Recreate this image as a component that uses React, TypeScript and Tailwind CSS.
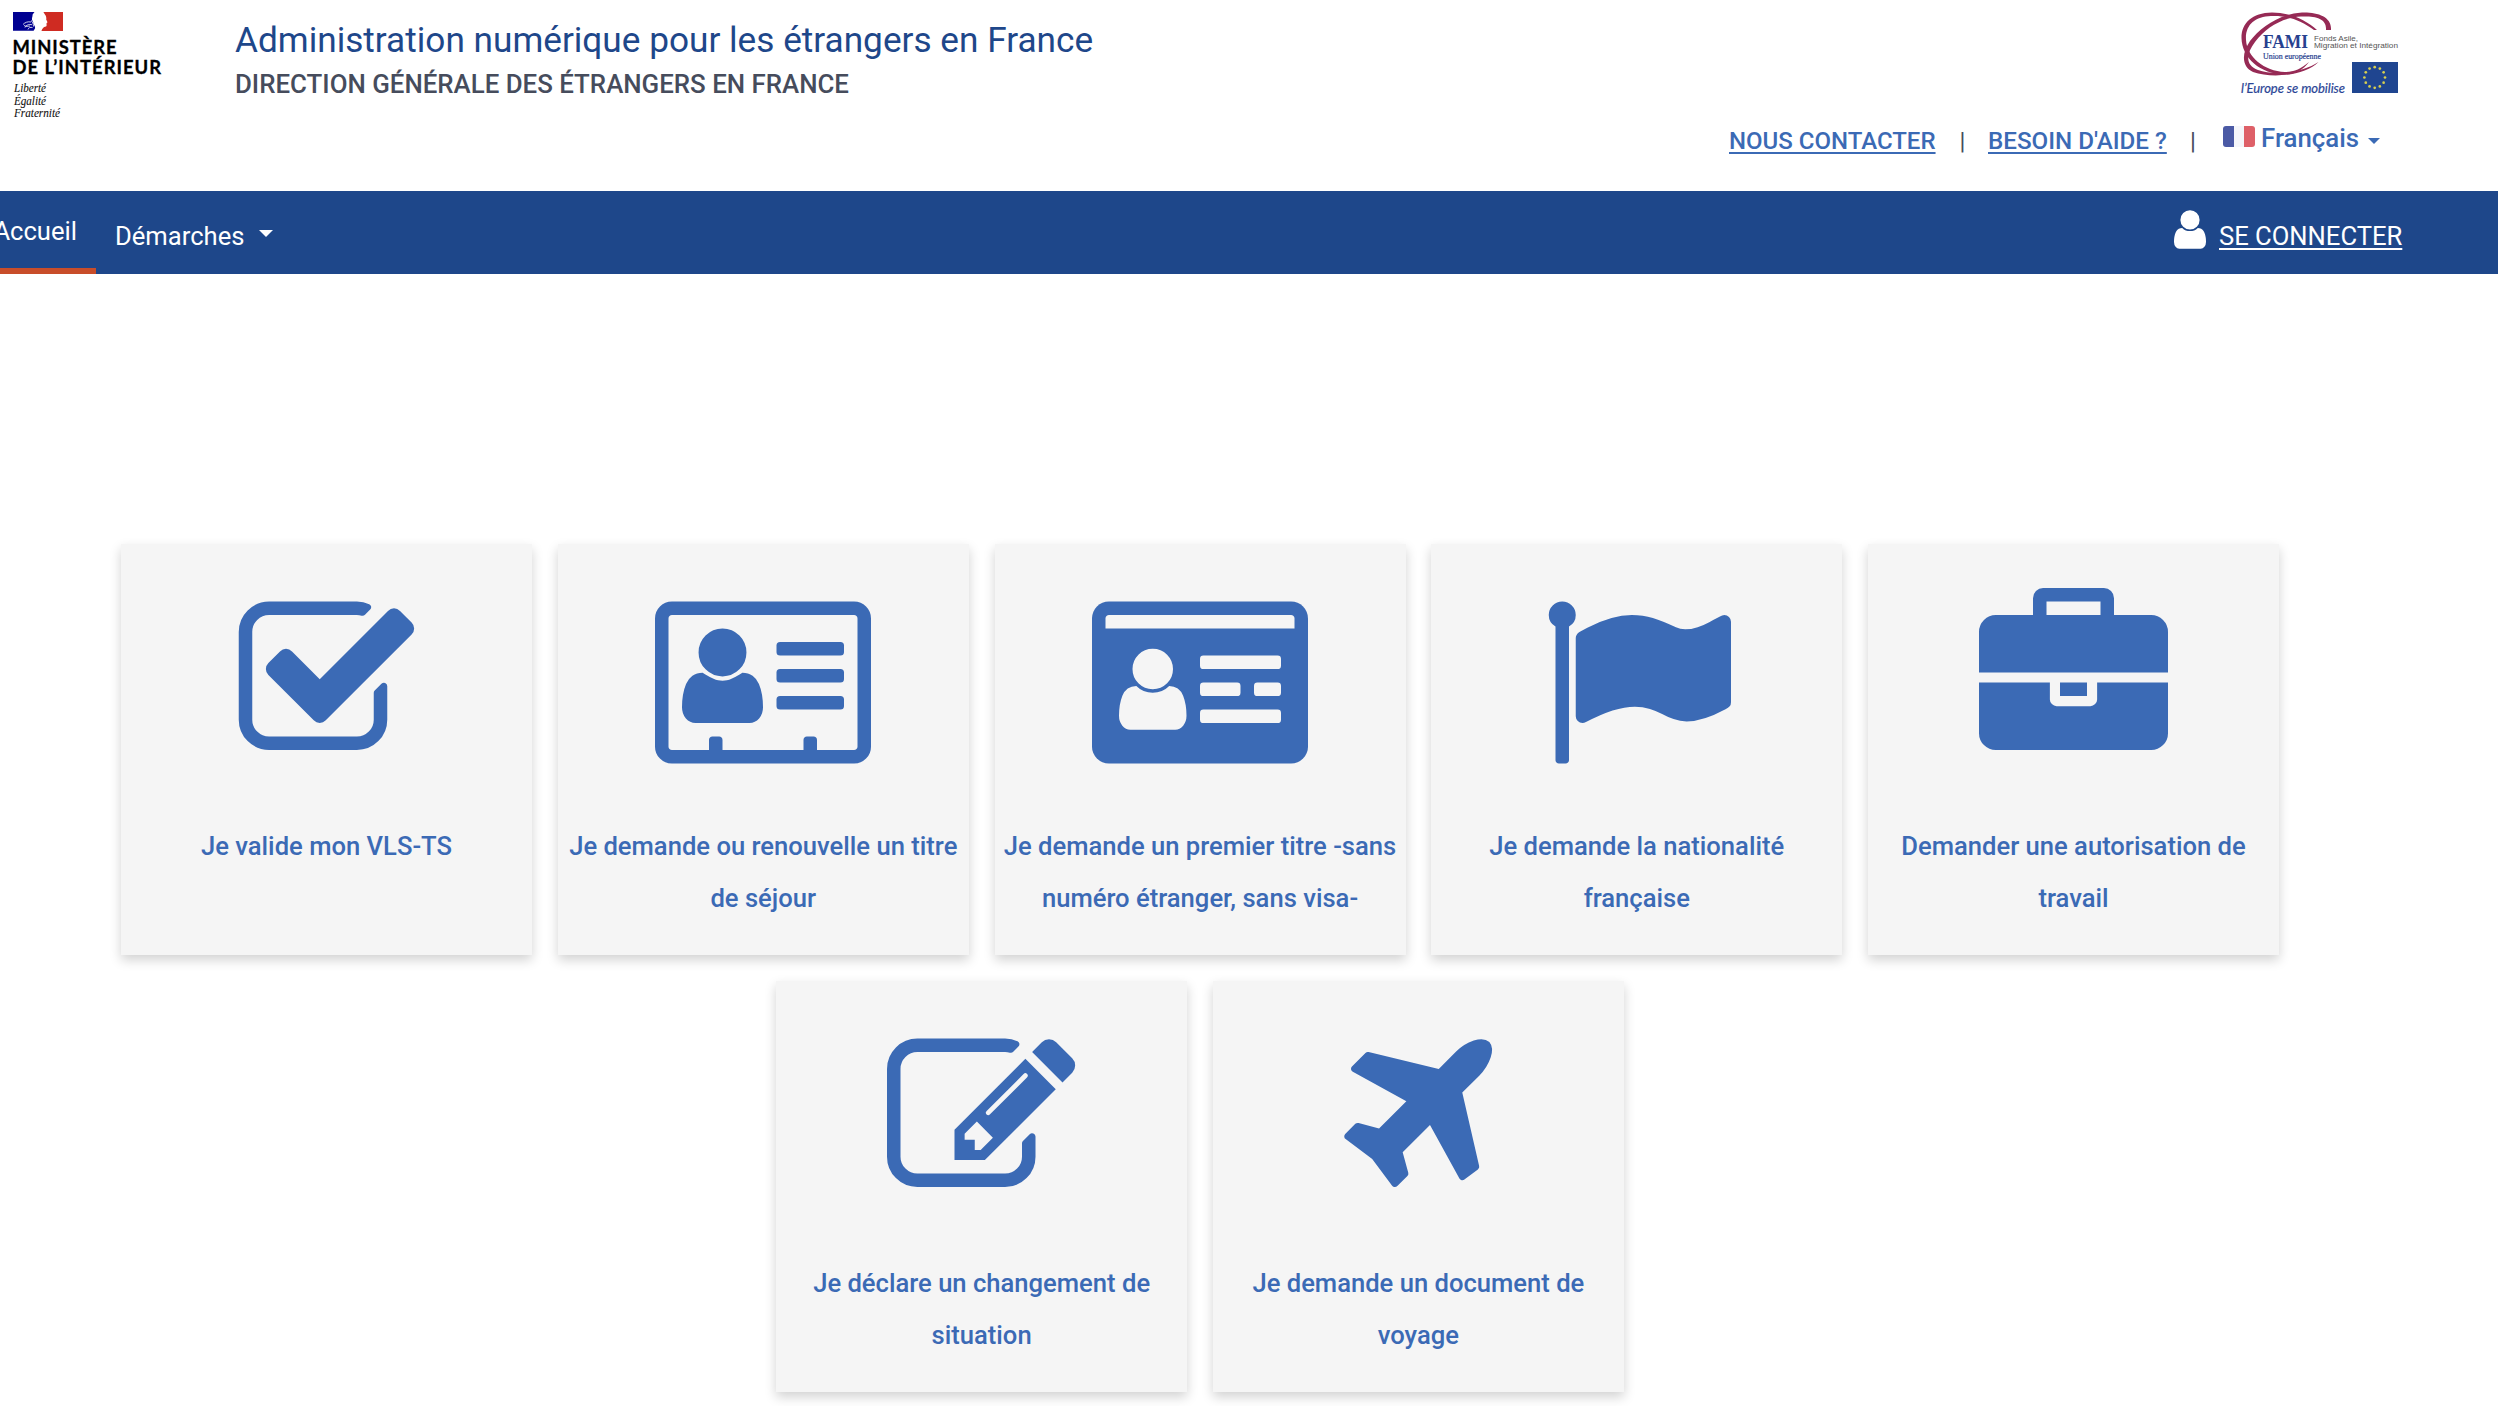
import type { ReactNode } from 'react';

const Glyph = ({ wide = false, children }: { wide?: boolean; children: ReactNode }) => (
  <svg
    viewBox={wide ? '0 0 2048 1792' : '0 0 1792 1792'}
    className={wide ? 'h-[189px] w-[216px] shrink-0' : 'h-[189px] w-[189px] shrink-0'}
    fill="currentColor"
    aria-hidden="true"
  >
    {children}
  </svg>
);

const CheckIcon = () => (
  <Glyph>
    <path d="M1472 930v318q0 119-84.5 203.5t-203.5 84.5h-832q-119 0-203.5-84.5t-84.5-203.5v-832q0-119 84.5-203.5t203.5-84.5h832q63 0 117 25 15 7 18 23 3 17-9 29l-49 49q-10 10-23 10-3 0-9-2-23-6-45-6h-832q-66 0-113 47t-47 113v832q0 66 47 113t113 47h832q66 0 113-47t47-113v-254q0-13 9-22l64-64q10-10 23-10 6 0 12 3 20 8 20 29zm231-489l-814 814q-24 24-57 24t-57-24l-430-430q-24-24-24-57t24-57l110-110q24-24 57-24t57 24l263 263 647-647q24-24 57-24t57 24l110 110q24 24 24 57t-24 57z" />
  </Glyph>
);

const AddressCardIcon = () => (
  <Glyph wide>
    <g transform="matrix(1 0 0 -1 0 1536)">
      <path d="M1024 405q0 64 -9 117.5t-29.5 103t-60.5 78t-97 28.5q-6 -4 -30 -18t-37.5 -21.5t-35.5 -17.5t-43 -14.5t-42 -4.5t-42 4.5t-43 14.5t-35.5 17.5t-37.5 21.5t-30 18q-57 0 -97 -28.5t-60.5 -78t-29.5 -103t-9 -117.5t37 -106.5t91 -42.5h512q54 0 91 42.5t37 106.5zM867 925q0 94 -66.5 160.5t-160.5 66.5t-160.5 -66.5t-66.5 -160.5t66.5 -160.5t160.5 -66.5t160.5 66.5t66.5 160.5z" />
    </g>
    <rect x="1152" y="512" width="640" height="128" rx="34" />
    <rect x="1152" y="768" width="640" height="128" rx="34" />
    <rect x="1152" y="1024" width="640" height="128" rx="34" />
    <path
      fillRule="evenodd"
      d="M160 128h1728q66 0 113 47t47 113v1216q0 66-47 113t-113 47h-1728q-66 0-113-47t-47-113v-1216q0-66 47-113t113-47zM160 256q-13 0-22.500 9.500t-9.500 22.500v1216q0 13 9.500 22.500t22.500 9.500h352v-96q0-14 9-23t23-9h64q14 0 23 9t9 23v96h768v-96q0-14 9-23t23-9h64q14 0 23 9t9 23v96h352q13 0 22.500-9.500t9.500-22.500v-1216q0-13-9.500-22.500t-22.500-9.500z"
    />
  </Glyph>
);

const IdCardIcon = () => (
  <Glyph wide>
    <rect x="0" y="128" width="2048" height="1536" rx="160" />
    <g className="text-[#f5f5f5]" fill="currentColor">
      <path d="M128 384v-96q0-13 9.500-22.500t22.500-9.500h1728q13 0 22.500 9.500t9.500 22.500v96z" />
      <g transform="matrix(1 0 0 -1 0 1536)">
        <path d="M896 324q0 54 -7.5 100.5t-24.5 90t-51 68.5t-81 25q-64 -64 -156 -64t-156 64q-47 0 -81 -25t-51 -68.5t-24.5 -90t-7.5 -100.500q0 -55 31.5 -93.5t75.5 -38.5h426q44 0 75.5 38.5t31.5 93.5zM768 768q0 80 -56 136t-136 56t-136 -56t-56 -136t56 -136t136 -56t136 56t56 136z" />
      </g>
      <rect x="1024" y="640" width="768" height="128" rx="32" />
      <rect x="1024" y="896" width="384" height="128" rx="32" />
      <rect x="1536" y="896" width="256" height="128" rx="32" />
      <rect x="1024" y="1152" width="768" height="128" rx="32" />
    </g>
  </Glyph>
);

const FlagIcon = () => (
  <Glyph>
    <path d="M320 256q0 72-64 110v1266q0 13-9.500 22.500t-22.500 9.500h-64q-13 0-22.500-9.500t-9.500-22.500v-1266q-64-38-64-110 0-53 37.500-90.500t90.500-37.500 90.500 37.500 37.500 90.500zm1472 64v763q0 25-12.500 38.500t-39.500 27.500q-215 116-369 116-61 0-123.500-22t-108.500-48-115.500-48-142.500-22q-192 0-464 146-17 9-33 9-26 0-45-19t-19-45v-742q0-32 31-55 21-14 79-43 236-120 421-120 107 0 200 29t219 88q38 19 88 19 54 0 117.500-21t110-47 88-47 54.500-21q26 0 45 19t19 45z" />
  </Glyph>
);

const BriefcaseIcon = () => (
  <Glyph>
    <path d="M640 256h512v-128h-512v128zm1152 640v480q0 66-47 113t-113 47h-1472q-66 0-113-47t-47-113v-480h672v160q0 26 19 45t45 19h320q26 0 45-19t19-45v-160h672zm-768 0v128h-256v-128h256zm768-480v384h-1792v-384q0-66 47-113t113-47h352v-160q0-40 28-68t68-28h576q40 0 68 28t28 68v160h352q66 0 113 47t47 113z" />
  </Glyph>
);

const PencilIcon = () => (
  <Glyph>
    <path d="M888 1184l116-116-152-152-116 116v56h96v96h56zm440-720q-16-16-33 1l-350 350q-17 17-1 33t33-1l350-350q17-17 1-33zm80 594v190q0 119-84.500 203.500t-203.500 84.500h-832q-119 0-203.500-84.500t-84.500-203.500v-832q0-119 84.500-203.500t203.500-84.500h832q63 0 117 25 15 7 18 23 3 17-9 29l-49 49q-14 14-32 8-23-6-45-6h-832q-66 0-113 47t-47 113v832q0 66 47 113t113 47h832q66 0 113-47t47-113v-126q0-13 9-22l64-64q15-15 35-7t20 29zm-96-738l288 288-672 672h-288v-288zm444 132l-92 92-288-288 92-92q28-28 68-28t68 28l152 152q28 28 28 68t-28 68z" />
  </Glyph>
);

const PlaneIcon = () => (
  <Glyph>
    <path d="M1568 160q44 52 12 148t-108 172l-161 161 160 696q5 19-12 33l-128 96q-7 6-19 6-4 0-7-1-15-3-21-16l-279-508-259 259 53 194q5 17-8 31l-96 96q-9 9-23 9h-2q-15-2-24-13l-189-252-252-189q-11-7-13-23-1-13 9-25l96-97q9-9 23-9 6 0 8 1l194 53 259-259-508-279q-14-8-17-24-2-16 9-27l128-128q14-13 30-8l665 159 160-160q76-76 172-108t148 12z" />
  </Glyph>
);

const UserIcon = () => (
  <svg viewBox="256 128 1280 1536" className="h-[39px] w-8 shrink-0" fill="currentColor" aria-hidden="true">
    <path d="M1536 1399q0 109-62.500 187t-150.500 78h-854q-88 0-150.500-78t-62.500-187q0-85 8.500-160.500t31.500-152 58.500-131 94-89 134.500-34.500q131 128 313 128t313-128q76 0 134.500 34.500t94 89 58.500 131 31.500 152 8.500 160.500zm-256-887q0 159-112.500 271.500t-271.500 112.500-271.500-112.500-112.500-271.500 112.500-271.500 271.500-112.500 271.500 112.500 112.500 271.500z" />
  </svg>
);

const MinistryLogo = () => (
  <svg viewBox="0 0 180 130" className="h-[130px] w-[180px] shrink-0" role="img" aria-label="Ministère de l’Intérieur">
    <path fill="#000091" d="M13 12h21.500c-1 1.500-2.300 2.300-2 4-.3 1.600-.8 2.600-.4 4 .6 1.500 1.400 2 1.200 3.400.8 1.800 2 3 1.800 4.800l-1.500 2.600H13z" />
    <path fill="#cf2b22" d="M63 12v19H41.500c.3-1.500 1-3 2.600-4.100 1.500-.3 2.300-.4 2.500-1.500l-.1-2.200 1-.9-1.300-2.700c.4-2-.2-4-1.300-5.200L43.400 12z" />
    <path fill="none" stroke="#fff" strokeWidth="0.8" d="M23 24.500c2-2 4.500-3.200 8-2.500M25 27.500c1-2.500 4-3.500 7-2.800M28 29.500c.5-2 2.500-2.500 4.500-2M24 25.500c2 1 4 1 6 .5M31 20.500c1.500 1 2.500 3.500 2.500 6" />
    <g fontFamily="Lato, sans-serif" fontWeight="700" fontSize="18.4" fill="#000" stroke="#000" strokeWidth="0.3">
      <text x="12.500" y="54.200" textLength="104" lengthAdjust="spacing">MINISTÈRE</text>
      <text x="12.500" y="74.300" textLength="148.500" lengthAdjust="spacing">DE L’INTÉRIEUR</text>
    </g>
    <g fontFamily="Liberation Serif, serif" fontStyle="italic" fontSize="12" fill="#111" stroke="#111" strokeWidth="0.1">
      <text x="14" y="92" textLength="32" lengthAdjust="spacingAndGlyphs">Liberté</text>
      <text x="14" y="104.700" textLength="32" lengthAdjust="spacingAndGlyphs">Égalité</text>
      <text x="14" y="117" textLength="46" lengthAdjust="spacingAndGlyphs">Fraternité</text>
    </g>
  </svg>
);

const stars = Array.from({ length: 12 }, (_, i) => {
  const a = (i * Math.PI) / 6;
  return { x: 134.7 + 10.3 * Math.sin(a), y: 69.5 - 10.3 * Math.cos(a) };
});

const FamiLogo = () => (
  <svg viewBox="0 0 160 92" className="h-[92px] w-[160px] shrink-0" role="img" aria-label="FAMI Union européenne">
    <g fill="#962a55">
      <path d="M77 22C66 12 50 4.500 32 4.500C12 5 1.500 15 1.500 30C2 50 20 66 45 66.500C55 66.500 63 62 69 54C61 61 54 64 45 64C24 63 7 49 6 32C5 17 15 8.500 31 8C48 7 62 13 74 22Z" />
      <path d="M91 22C92 9 78 4 62 4.500C38 6 20 20 10 33C1 46 2 59 13 64C33 71 66 67 78.500 54C62 65 34 68 18 62C5 57 6 46 15 34C26 19 43 9.500 61 8.500C75 8 87 10 86 22Z" />
    </g>
    <g fontFamily="Liberation Serif, serif" fill="#27418f">
      <text x="23" y="39.700" fontSize="19.500" fontWeight="700" textLength="45" lengthAdjust="spacingAndGlyphs">FAMI</text>
      <text x="23" y="51.300" fontSize="8.200" stroke="#27418f" strokeWidth="0.200" textLength="58" lengthAdjust="spacingAndGlyphs">Union européenne</text>
    </g>
    <g fontFamily="Liberation Sans, sans-serif" fontSize="7.800" fill="#555">
      <text x="74" y="32.500" textLength="44" lengthAdjust="spacingAndGlyphs">Fonds Asile,</text>
      <text x="74" y="40.200" textLength="84" lengthAdjust="spacingAndGlyphs">Migration et Intégration</text>
    </g>
    <text x="1" y="85" fontFamily="Lato, sans-serif" fontStyle="italic" fontWeight="400" fontSize="13" fill="#2a4596" stroke="#2a4596" strokeWidth="0.200" textLength="104" lengthAdjust="spacing">l’Europe se mobilise</text>
    <rect x="112" y="54" width="46" height="31" fill="#1f4590" />
    {stars.map((s, i) => (
      <circle key={i} cx={s.x} cy={s.y} r="1.350" fill="#d8cf4e" />
    ))}
  </svg>
);

const FrenchFlag = () => (
  <span className="flex h-[21px] w-8 overflow-hidden rounded-[3px]">
    <span className="w-[11px] bg-[#4b5aa5]" />
    <span className="w-[10px] bg-[#f5f6fa]" />
    <span className="w-[11px] bg-[#de6068]" />
  </span>
);

const Card = ({ icon, lines }: { icon: ReactNode; lines: string[] }) => (
  <a
    href="#"
    className="flex h-[411px] w-[411px] shrink-0 flex-col items-center bg-[#f5f5f5] pt-11 text-[#3b6ab5] shadow-[0_5px_11px_rgba(0,0,0,0.18)]"
  >
    {icon}
    <span className="mt-[43px] text-center text-[25.6px] leading-[52px] font-medium whitespace-nowrap">
      {lines.map((line) => (
        <span key={line} className="block">
          {line}
        </span>
      ))}
    </span>
  </a>
);

const firstRow = [
  { icon: <CheckIcon />, lines: ['Je valide mon VLS-TS'] },
  { icon: <AddressCardIcon />, lines: ['Je demande ou renouvelle un titre', 'de séjour'] },
  { icon: <IdCardIcon />, lines: ['Je demande un premier titre -sans', 'numéro étranger, sans visa-'] },
  { icon: <FlagIcon />, lines: ['Je demande la nationalité', 'française'] },
  { icon: <BriefcaseIcon />, lines: ['Demander une autorisation de', 'travail'] },
];

const secondRow = [
  { icon: <PencilIcon />, lines: ['Je déclare un changement de', 'situation'] },
  { icon: <PlaneIcon />, lines: ['Je demande un document de', 'voyage'] },
];

export default function App() {
  return (
    <div className="h-[1406px] w-[2498px] overflow-hidden bg-white font-['Roboto',sans-serif]">
      <header className="flex h-[191px] items-start">
        <MinistryLogo />
        <div className="ml-[55px] pt-[19px] whitespace-nowrap">
          <h1 className="text-[35.2px] leading-[42px] text-[#1e478a]">
            Administration numérique pour les étrangers en France
          </h1>
          <p className="mt-[5px] text-[25.85px] leading-[36px] font-medium text-[#464c5c]">
            DIRECTION GÉNÉRALE DES ÉTRANGERS EN FRANCE
          </p>
        </div>
        <div className="ml-auto flex flex-col items-end pt-2">
          <div className="mr-[98px]">
            <FamiLogo />
          </div>
          <div className="mr-[118px] flex h-10 items-start pt-[23px] text-[24px] leading-[36px] whitespace-nowrap text-[#3b6ab5]">
            <a href="#" className="w-[206px] font-medium underline decoration-2 underline-offset-[3px]">
              NOUS CONTACTER
            </a>
            <span className="w-[53px] pl-[2px] text-center text-[#464c5c]">|</span>
            <a href="#" className="w-[178px] text-[24.2px] font-medium underline decoration-2 underline-offset-[3px]">
              BESOIN D'AIDE ?
            </a>
            <span className="w-[57px] pl-6 text-[#464c5c]">|</span>
            <a href="#" className="-mt-[3px] flex items-start text-[25.8px] font-medium">
              <span className="mt-[6px] mr-[6px]">
                <FrenchFlag />
              </span>
              <span className="w-[98px]">Français</span>
              <svg viewBox="0 0 12 6" className="mt-[18px] ml-[9px] h-[6px] w-3" fill="currentColor" aria-hidden="true">
                <path d="M0 0h12L6 6z" />
              </svg>
            </a>
          </div>
        </div>
      </header>

      <nav className="flex h-[83px] items-stretch bg-[#1e478a] text-[25.6px] leading-[36px] whitespace-nowrap text-white">
        <a href="#" className="flex w-24 justify-end border-b-[6px] border-[#c84d2a] pt-[22px] pr-[19px]">
          Accueil
        </a>
        <a href="#" className="flex items-start pt-[27px] pl-[19px]">
          <span className="w-[129px]">Démarches</span>
          <svg viewBox="0 0 14 7" className="mt-[12px] ml-[15px] h-[7px] w-[14px]" fill="currentColor" aria-hidden="true">
            <path d="M0 0h14L7 7z" />
          </svg>
        </a>
        <a href="#" className="mr-24 ml-auto flex items-start pt-[19px]">
          <UserIcon />
          <span className="mt-[8px] ml-[13px] w-[183px] underline decoration-2 underline-offset-[3px]">SE CONNECTER</span>
        </a>
      </nav>

      <main className="flex w-[2400px] flex-col items-center gap-[25.500px] pt-[270px]">
        <section className="flex gap-[25.750px]">
          {firstRow.map((card) => (
            <Card key={card.lines[0]} {...card} />
          ))}
        </section>
        <section className="flex gap-[25.750px]">
          {secondRow.map((card) => (
            <Card key={card.lines[0]} {...card} />
          ))}
        </section>
      </main>
    </div>
  );
}
